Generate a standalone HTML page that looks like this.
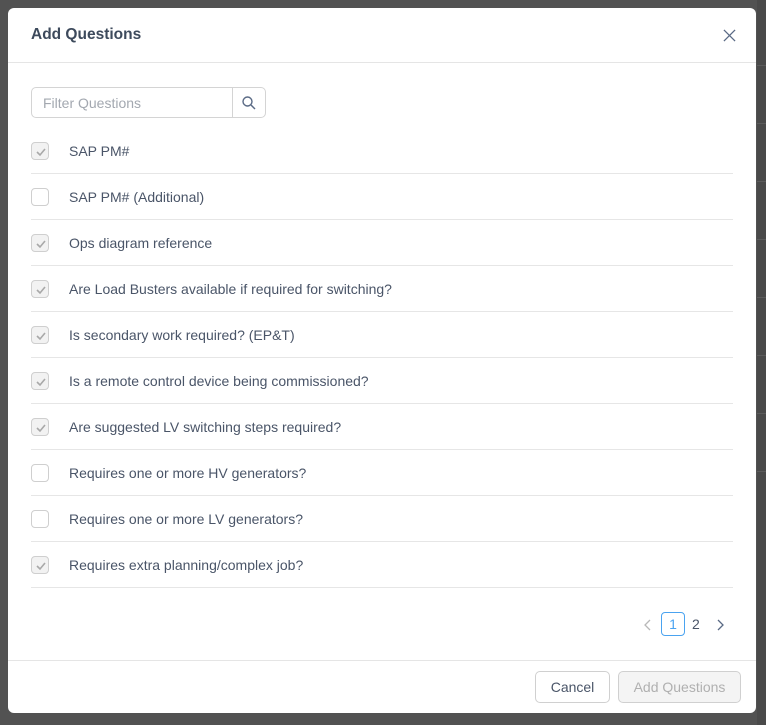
<!DOCTYPE html>
<html><head><style>
*{box-sizing:border-box;margin:0;padding:0}
body{width:766px;height:725px;background:#525252;font-family:"Liberation Sans",sans-serif;position:relative;overflow:hidden}
.bgr{position:absolute;left:757px;top:0;width:9px;height:725px;background:#4a4a4a}
.bgr div{position:absolute;left:0;width:9px;border-top:1px solid #5c5c5c}
.modal{position:absolute;left:8px;top:8px;width:748px;height:705px;background:#fff;border-radius:6px}
.hd{height:55px;border-bottom:1px solid #e5e5e5;position:relative}
.hd h1{position:absolute;left:23px;top:18px;font-size:15.5px;font-weight:bold;color:#3d4a5c}
.x{position:absolute;left:715px;top:21px}
.search{position:absolute;left:23px;top:79px;width:235px;height:31px;border:1px solid #d4d4d4;border-radius:5px}
.search span{position:absolute;left:11px;top:7px;font-size:14px;color:#a3a8b0}
.search .b{position:absolute;left:200px;top:0;width:1px;height:29px;background:#d4d4d4}
.search svg{position:absolute;left:209px;top:7px}
.row{position:absolute;left:23px;width:702px;height:46px;border-bottom:1px solid #e6e6e6}
.cb{position:absolute;left:0;top:14px;width:18px;height:18px;border:1px solid #cfcfcf;border-radius:4px;background:#fff}
.cb.c{background:#f2f2f2}
.cb svg{position:absolute;left:3px;top:3px}
.row span{position:absolute;left:38px;top:15px;font-size:14px;color:#4a5568}
.pg{position:absolute;top:604px;font-size:14px}
.foot{position:absolute;left:0;top:652px;width:748px;border-top:1px solid #e5e5e5}
.btn{position:absolute;top:663px;height:32px;border:1px solid #d0d0d0;border-radius:5px;font-size:14px;text-align:center;line-height:30px}
</style></head><body>
<div class="bgr"><div style="top:65px"></div><div style="top:123px"></div><div style="top:181px"></div><div style="top:239px"></div><div style="top:297px"></div><div style="top:355px"></div><div style="top:413px"></div><div style="top:471px"></div></div>
<div class="modal">
<div class="hd"><h1>Add Questions</h1>
<svg class="x" width="13" height="13" viewBox="0 0 14 14"><path d="M1 1L13 13M13 1L1 13" stroke="#5a6a85" stroke-width="1.4"/></svg></div>
<div class="search" style="left:23px;top:79px"><span>Filter Questions</span><div class="b"></div>
<svg width="16" height="16" viewBox="0 0 16 16"><circle cx="6.5" cy="6.5" r="4.5" fill="none" stroke="#5a6a85" stroke-width="1.4"/><path d="M10 10L14 14" stroke="#5a6a85" stroke-width="1.5"/></svg></div>
<div class="row" style="top:120px"><div class="cb c"><svg width="12" height="12" viewBox="0 0 12 12"><path d="M2 6l3 3 5-6" fill="none" stroke="#a8a8a8" stroke-width="1.6"/></svg></div><span>SAP PM#</span></div>
<div class="row" style="top:166px"><div class="cb"></div><span>SAP PM# (Additional)</span></div>
<div class="row" style="top:212px"><div class="cb c"><svg width="12" height="12" viewBox="0 0 12 12"><path d="M2 6l3 3 5-6" fill="none" stroke="#a8a8a8" stroke-width="1.6"/></svg></div><span>Ops diagram reference</span></div>
<div class="row" style="top:258px"><div class="cb c"><svg width="12" height="12" viewBox="0 0 12 12"><path d="M2 6l3 3 5-6" fill="none" stroke="#a8a8a8" stroke-width="1.6"/></svg></div><span>Are Load Busters available if required for switching?</span></div>
<div class="row" style="top:304px"><div class="cb c"><svg width="12" height="12" viewBox="0 0 12 12"><path d="M2 6l3 3 5-6" fill="none" stroke="#a8a8a8" stroke-width="1.6"/></svg></div><span>Is secondary work required? (EP&amp;T)</span></div>
<div class="row" style="top:350px"><div class="cb c"><svg width="12" height="12" viewBox="0 0 12 12"><path d="M2 6l3 3 5-6" fill="none" stroke="#a8a8a8" stroke-width="1.6"/></svg></div><span>Is a remote control device being commissioned?</span></div>
<div class="row" style="top:396px"><div class="cb c"><svg width="12" height="12" viewBox="0 0 12 12"><path d="M2 6l3 3 5-6" fill="none" stroke="#a8a8a8" stroke-width="1.6"/></svg></div><span>Are suggested LV switching steps required?</span></div>
<div class="row" style="top:442px"><div class="cb"></div><span>Requires one or more HV generators?</span></div>
<div class="row" style="top:488px"><div class="cb"></div><span>Requires one or more LV generators?</span></div>
<div class="row" style="top:534px"><div class="cb c"><svg width="12" height="12" viewBox="0 0 12 12"><path d="M2 6l3 3 5-6" fill="none" stroke="#a8a8a8" stroke-width="1.6"/></svg></div><span>Requires extra planning/complex job?</span></div>
<svg style="position:absolute;left:636px;top:611px" width="8" height="12" viewBox="0 0 8 12"><path d="M6 1L1 6l5 5" fill="none" stroke="#b8b8b8" stroke-width="1.3"/></svg>
<div style="position:absolute;left:653px;top:604px;width:24px;height:24px;border:1px solid #4aa3f0;border-radius:4px;color:#4aa3f0;font-size:14px;text-align:center;line-height:22px">1</div>
<div class="pg" style="left:684px;top:608px;color:#4a5568">2</div>
<svg style="position:absolute;left:708px;top:611px" width="8" height="12" viewBox="0 0 8 12"><path d="M2 1l5 5-5 5" fill="none" stroke="#5a6a85" stroke-width="1.3"/></svg>
<div class="foot"></div>
<div class="btn" style="left:527px;width:75px;color:#4a5568;background:#fff">Cancel</div>
<div class="btn" style="left:610px;width:123px;color:#b0b0b0;background:#f4f4f4">Add Questions</div>
</div>
</body></html>
